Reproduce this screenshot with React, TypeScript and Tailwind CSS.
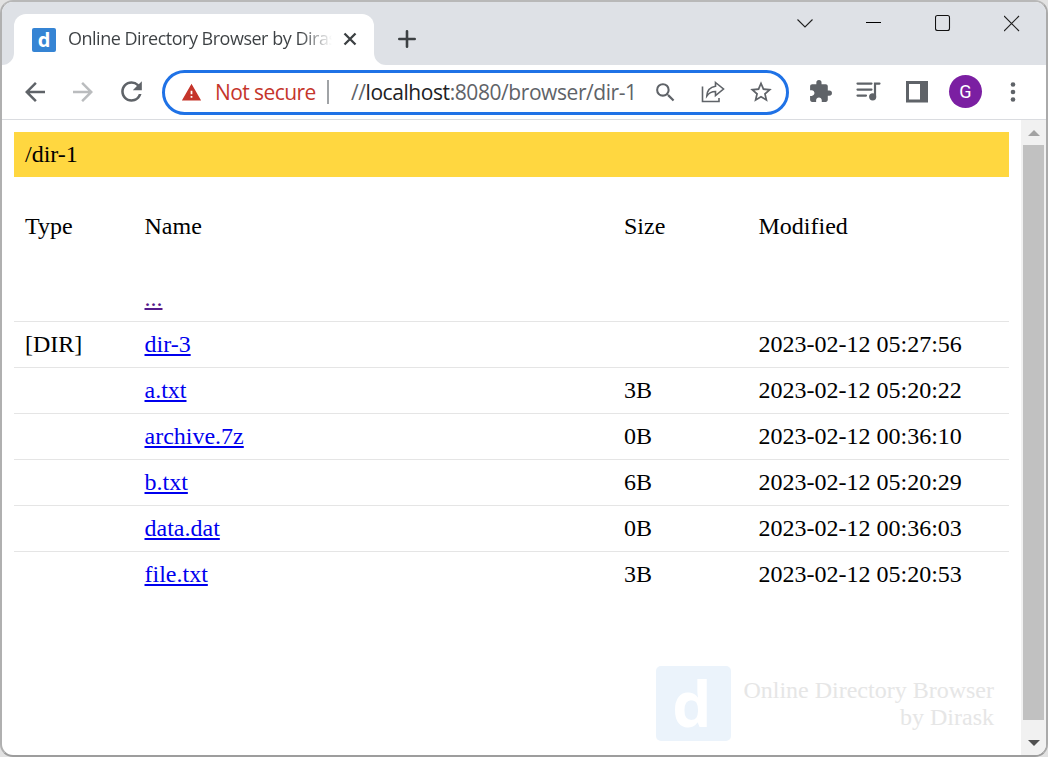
import type { ReactNode } from "react";
import {
  MdArrowBack,
  MdArrowForward,
  MdExtension,
  MdRefresh,
  MdSearch,
  MdStarBorder,
  MdWarning,
} from "react-icons/md";

type Entry = {
  type: string;
  name: string;
  size: string;
  modified: string;
  visited?: boolean;
};

const entries: Entry[] = [
  { type: "", name: "...", size: "", modified: "", visited: true },
  { type: "[DIR]", name: "dir-3", size: "", modified: "2023-02-12 05:27:56" },
  { type: "", name: "a.txt", size: "3B", modified: "2023-02-12 05:20:22" },
  { type: "", name: "archive.7z", size: "0B", modified: "2023-02-12 00:36:10" },
  { type: "", name: "b.txt", size: "6B", modified: "2023-02-12 05:20:29" },
  { type: "", name: "data.dat", size: "0B", modified: "2023-02-12 00:36:03" },
  { type: "", name: "file.txt", size: "3B", modified: "2023-02-12 05:20:53" },
];

function Slot({ className, children }: { className: string; children: ReactNode }) {
  return <div className={`flex shrink-0 items-center justify-center ${className}`}>{children}</div>;
}

function WindowControls() {
  return (
    <div className="mt-[10px] flex h-6 shrink-0">
      <svg width="16" height="24" fill="none" stroke="#222" strokeWidth="1.1">
        <path d="M.5 7.500 8 15l7.500-7.500" />
      </svg>
      <svg className="ml-[53px]" width="16" height="24" fill="none" stroke="#000">
        <path d="M0 10.500h15" />
      </svg>
      <svg className="ml-[53px]" width="16" height="24" fill="none" stroke="#111" strokeWidth="1.1">
        <rect x=".5" y="3.500" width="14" height="15" rx="2" />
      </svg>
      <svg className="ml-[53px]" width="16" height="24" fill="none" stroke="#222" strokeWidth="1.2">
        <path d="m0 4 15 15M15 4 0 19" />
      </svg>
    </div>
  );
}

function TabStrip() {
  return (
    <div className="flex h-[63px] shrink-0 bg-[#dee1e6]">
      <svg className="mt-auto shrink-0" width="12" height="12">
        <path d="M12 0v12H0A12 12 0 0 0 12 0" fill="#fff" />
      </svg>
      <div className="mt-3 flex h-[51px] w-[360px] shrink-0 items-center rounded-t-[12px] bg-white pl-[18px]">
        <div className="flex h-6 w-6 shrink-0 items-center justify-center rounded-[2px] bg-[#3584d4] font-['Open_Sans',sans-serif] text-[20px] leading-6 font-bold text-white">
          d
        </div>
        <div className="ml-3 w-[264px] overflow-hidden bg-linear-to-r from-[#3c4043] from-88% to-transparent bg-clip-text pb-[3px] font-['Open_Sans',sans-serif] text-[18px] leading-7 tracking-[-0.49px] whitespace-nowrap text-transparent">
          Online Directory Browser by Dirask
        </div>
        <svg className="mb-px ml-[11px] shrink-0" width="14" height="14" stroke="#3c4043" strokeWidth="2.300">
          <path d="m1.500 1.500 11 11m0-11-11 11" />
        </svg>
      </div>
      <svg className="mt-auto shrink-0" width="12" height="12">
        <path d="M0 0v12h12A12 12 0 0 1 0 0" fill="#fff" />
      </svg>
      <svg className="mt-7 ml-3 shrink-0" width="18" height="18" stroke="#3c4043" strokeWidth="2.600" strokeLinecap="round">
        <path d="M9 1.300v15.400M1.300 9h15.400" />
      </svg>
      <div className="ml-auto pr-[26px]">
        <WindowControls />
      </div>
    </div>
  );
}

function AddressBar() {
  return (
    <div className="ml-4 flex h-[45px] w-[627px] shrink-0 items-center rounded-full border-3 border-[#1f72e6] pl-[15px] font-['Open_Sans',sans-serif] text-[21px] leading-7">
      <Slot className="w-[22px]">
        <MdWarning size={21} color="#c5352b" />
      </Slot>
      <span className="ml-[13px] w-[112px] tracking-[-0.58px] whitespace-nowrap text-[#c5352b]">
        Not secure
      </span>
      <div className="h-6 w-[2px] shrink-0 bg-[#a0a3a6]" />
      <span className="ml-[22px] w-[297px] tracking-[-0.43px] whitespace-nowrap text-[#5f6368]">
        //<span className="text-[#202124]">localhost</span>:8080/browser/dir-1
      </span>
      <Slot className="ml-[3px] w-7">
        <MdSearch size={25} color="#5f6368" />
      </Slot>
      <svg className="ml-[22px] shrink-0" width="24" height="24" fill="none" stroke="#5f6368" strokeWidth="1.600">
        <path d="M1.500 6.500v15H18v-3.500" />
        <path d="M14.500 2.500 22.500 9l-8 6.500v-4c-4 0-6.500 1.300-8.700 4.500.3-5.400 3.200-9 8.700-9.800z" />
      </svg>
      <Slot className="ml-[23px] w-[26px]">
        <MdStarBorder size={26} color="#5f6368" />
      </Slot>
    </div>
  );
}

function Toolbar() {
  return (
    <div className="flex h-[55px] shrink-0 items-center border-b border-[#dadce0] bg-white pl-[18px]">
      <MdArrowBack size={30} color="#5f6368" className="mb-px shrink-0" />
      <MdArrowForward size={30} color="#babcbe" className="mb-px ml-[18px] shrink-0" />
      <MdRefresh size={31} color="#5f6368" className="mb-px ml-[18px] shrink-0" />
      <div className="-ml-px">
        <AddressBar />
      </div>
      <MdExtension size={25} color="#5f6368" className="mb-px ml-[19px] shrink-0" />
      <svg className="ml-[23px] shrink-0" width="26" height="22" fill="none" stroke="#5f6368" strokeWidth="2.200">
        <path
          d="M1.500 2.600h14M1.500 8.600h14M1.500 14.600h8.500M23.500 2.600h-4.500v12"
          strokeLinecap="round"
        />
        <circle cx="16.700" cy="15.800" r="3.600" fill="#5f6368" stroke="none" />
      </svg>
      <svg className="ml-6 shrink-0" width="22" height="22">
        <path d="M0 0h22v21.500H0zM3 3v15.500h11V3z" fill="#5f6368" fillRule="evenodd" />
      </svg>
      <div className="mb-px ml-[21px] flex size-[33px] shrink-0 items-center justify-center rounded-full bg-[#7b1fa2] font-[Roboto,sans-serif] text-[18px] text-white">
        G
      </div>
      <svg className="mb-px ml-[28px] shrink-0" width="6" height="22" fill="#5f6368">
        <circle cx="3" cy="3.500" r="2.300" />
        <circle cx="3" cy="11" r="2.300" />
        <circle cx="3" cy="18.500" r="2.300" />
      </svg>
    </div>
  );
}

function DirectoryTable() {
  return (
    <table className="mt-[27px] w-full table-fixed border-collapse text-left">
      <colgroup>
        <col className="w-[119.500px]" />
        <col className="w-[479.500px]" />
        <col className="w-[134.500px]" />
        <col />
      </colgroup>
      <thead>
        <tr className="h-[71px] align-top">
          {["Type", "Name", "Size", "Modified"].map((label) => (
            <th key={label} className="px-[11px] pt-2 font-normal">
              {label}
            </th>
          ))}
        </tr>
      </thead>
      <tbody>
        {entries.map((entry) => (
          <tr key={entry.name} className="h-[46px] border-b border-[#e5e5e5] last:border-b-0">
            <td className="px-[11px]">{entry.type}</td>
            <td className="px-[11px]">
              <a
                href="#"
                className={`underline ${entry.visited ? "text-[#551a8b]" : "text-[#0000ee]"}`}
              >
                {entry.name}
              </a>
            </td>
            <td className="px-[11px]">{entry.size}</td>
            <td className="px-[11px] whitespace-nowrap">{entry.modified}</td>
          </tr>
        ))}
      </tbody>
    </table>
  );
}

function Watermark() {
  return (
    <div className="mt-auto mr-[15px] mb-[14px] flex items-center justify-end gap-3 text-[#e6e6e6]">
      <div className="flex size-[75px] items-center justify-center rounded-[5px] bg-[#ebf3fb] pr-1 font-['Open_Sans',sans-serif] text-[62px] leading-[75px] font-bold text-white">
        d
      </div>
      <div className="text-right leading-[27px]">
        Online Directory Browser
        <br />
        by Dirask
      </div>
    </div>
  );
}

function Scrollbar() {
  return (
    <div className="flex w-[25px] shrink-0 flex-col items-center bg-[#f1f1f1]">
      <svg className="mt-[10px] shrink-0" width="12" height="6">
        <path d="M0 6 6 0l6 6z" fill="#a3a3a3" />
      </svg>
      <div className="mt-[9px] w-[21px] grow bg-[#c1c1c1]" />
      <svg className="mt-5 mb-[9px] shrink-0" width="12" height="6">
        <path d="m0 0 6 6 6-6z" fill="#505050" />
      </svg>
    </div>
  );
}

export default function App() {
  return (
    <div className="h-[757px] w-[1048px] overflow-hidden bg-[#e2e2e2]">
      <div className="flex h-full flex-col overflow-hidden rounded-[13px] border-2 border-t-[#b8b8b8] border-r-[#aaaaaa] border-b-[#9d9d9d] border-l-[#b0b0b0] bg-white">
        <TabStrip />
        <Toolbar />
        <div className="flex min-h-0 grow">
          <main className="flex min-w-0 grow flex-col pt-3 pr-3 pl-3 font-['Liberation_Serif',serif] text-[24px] leading-7 text-black">
            <div className="flex h-[45px] shrink-0 items-center bg-[#ffd740] px-[11px] pb-[2px]">/dir-1</div>
            <DirectoryTable />
            <Watermark />
          </main>
          <Scrollbar />
        </div>
      </div>
    </div>
  );
}
